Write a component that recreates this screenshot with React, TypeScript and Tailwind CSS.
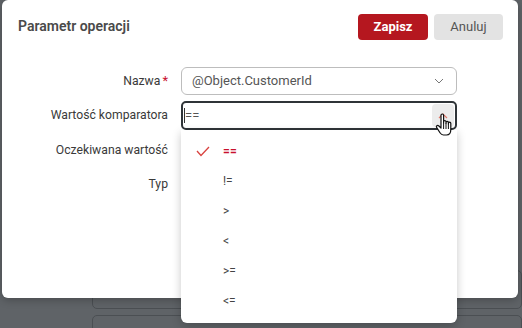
import React from "react"

const options = ["==", "!=", ">", "<", ">=", "<="]

function HandCursor() {
  return (
    <svg width="20" height="26" viewBox="0 0 20 26" className="absolute left-[435px] top-[112px]" aria-hidden="true">
      <path
        d="M6 13 V3.2 C6 1.6 8.6 1.6 8.6 3.2 V11 V9.6 C8.6 8.2 11 8.2 11 9.6 V11.4 V10.4 C11 9 13.4 9 13.4 10.4 V12 V11.2 C13.4 9.8 15.8 9.8 15.8 11.2 V17.5 C15.8 20.5 14.2 23 11.5 23 H8.4 C6.8 23 5.9 22.2 5 20.8 L1.6 15.4 C0.9 14.2 2.4 12.8 3.6 13.8 L6 16 Z"
        fill="#fff"
        stroke="#111"
        strokeWidth="1.2"
        strokeLinejoin="round"
      />
      <path d="M8.6 11 V17 M11 11.4 V17 M13.4 12 V17" stroke="#111" strokeWidth="1" />
    </svg>
  )
}

export default function App() {
  return (
    <div className="relative w-[522px] h-[328px] overflow-hidden bg-[#5f6367] font-['Roboto',sans-serif]">
      {/* page behind the overlay */}
      <div className="flex flex-col gap-[6px] pt-[270px] pl-[92px]">
        <div className="h-[39px] rounded-[5px] border border-[#4b4f53]" />
        <div className="flex items-start">
          <span className="-ml-[40px] w-[40px] pt-[8px] text-[13px] text-[#3a3d40]">Opis</span>
          <div className="h-[40px] flex-1 rounded-[5px] border border-[#4b4f53]" />
        </div>
      </div>

      {/* modal */}
      <div className="absolute left-[2px] top-0 w-[516px] h-[298px] rounded-[6px] bg-white shadow-[0_2px_8px_rgba(0,0,0,0.25)]">
        <div className="flex items-start justify-between pl-[16px] pr-[15px] pt-[14px]">
          <h1 className="pt-[2px] text-[14px] font-semibold text-[#4a4a4a]">Parametr operacji</h1>
          <div className="flex gap-[6px]">
            <button className="h-[26px] w-[70px] rounded-[4px] bg-[#b5171f] text-[13px] font-bold text-white">Zapisz</button>
            <button className="h-[26px] w-[69px] rounded-[4px] bg-[#e3e3e3] text-[13px] text-[#555]">Anuluj</button>
          </div>
        </div>

        <div className="mt-[27px] grid grid-cols-[166px_276px] gap-x-[13px] gap-y-[6px] text-[12.2px] text-[#3a3a3a]">
          <label className="flex h-[28px] items-center justify-end">
            Nazwa<span className="ml-[2px] text-[13px] text-[#c8102e]">*</span>
          </label>
          <div className="flex h-[28px] items-center justify-between rounded-[6px] border border-[#bdbdbd] pl-[10px] pr-[12px] text-[13px] text-[#555]">
            <span>@Object.CustomerId</span>
            <svg width="10" height="6" viewBox="0 0 10 6" aria-hidden="true">
              <path d="M1 1 L5 5 L9 1" fill="none" stroke="#777" strokeWidth="1" />
            </svg>
          </div>

          <label className="flex h-[28px] items-center justify-end">Wartość komparatora</label>
          <div className="flex h-[29px] items-center justify-between rounded-[5px] border-2 border-[#2f3438] pl-[1px] pr-[1px] text-[13px] text-[#555]">
            <span className="flex items-center">
              <span className="h-[15px] w-px bg-[#333]" />
              <span>==</span>
            </span>
            <span className="flex h-[23px] w-[22px] items-center justify-center rounded-[4px] bg-[#ececec]">
              <svg width="10" height="6" viewBox="0 0 10 6" aria-hidden="true">
                <path d="M1 5 L5 1 L9 5" fill="none" stroke="#e0786a" strokeWidth="1.2" />
              </svg>
            </span>
          </div>

          <label className="flex h-[28px] items-center justify-end">Oczekiwana wartość</label>
          <div className="h-[28px]" />

          <label className="flex h-[28px] items-center justify-end">Typ</label>
          <div className="h-[28px]" />
        </div>
      </div>

      {/* open dropdown */}
      <ul className="absolute left-[181px] top-[130px] w-[276px] h-[193px] rounded-b-[6px] bg-white pt-[6px] shadow-[0_3px_10px_rgba(0,0,0,0.22)]">
        {options.map((o, i) => (
          <li key={o} className="flex h-[30px] items-center text-[12px]">
            <span className="flex w-[42px] justify-center pl-[2px]">
              {i === 0 && (
                <svg width="14" height="11" viewBox="0 0 14 11" aria-hidden="true">
                  <path d="M1 5 L5 9.5 L13 1" fill="none" stroke="#d9433f" strokeWidth="1.3" />
                </svg>
              )}
            </span>
            <span className={i === 0 ? "font-bold text-[#c8102e]" : "text-[#444]"}>{o}</span>
          </li>
        ))}
      </ul>

      <HandCursor />
    </div>
  )
}
